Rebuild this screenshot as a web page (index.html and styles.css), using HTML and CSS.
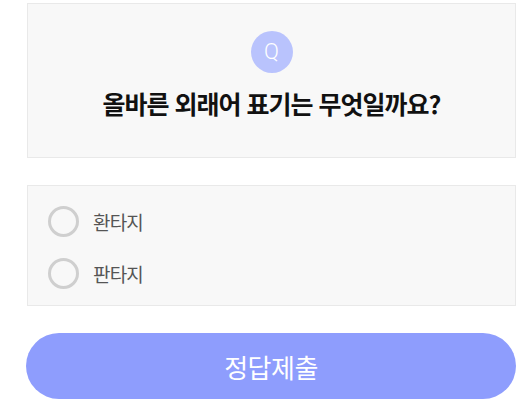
FILE: index.html
```html
<!DOCTYPE html>
<html lang="ko">
<head>
<meta charset="utf-8">
<link rel="stylesheet" href="styles.css">
</head>
<body>
<div class="quiz">
  <div class="question-card">
    <div class="q-badge">Q</div>
    <div class="q-text">올바른 외래어 표기는 무엇일까요?</div>
  </div>
  <div class="options-card">
    <label class="option"><span class="radio"></span><span class="opt-text">환타지</span></label>
    <label class="option"><span class="radio"></span><span class="opt-text">판타지</span></label>
  </div>
  <button class="submit">정답제출</button>
</div>
</body>
</html>
```

FILE: styles.css
```css
* { box-sizing: border-box; }
html, body { margin: 0; padding: 0; background: #fff; }
body {
  font-family: "Noto Sans CJK KR", "Noto Sans", sans-serif;
}
.quiz {
  width: 489px;
  margin-left: 27px;
  padding-top: 3px;
  display: flex;
  flex-direction: column;
}
.question-card {
  height: 155px;
  background: #f8f8f8;
  border: 1px solid #e9e9e9;
  display: flex;
  flex-direction: column;
  align-items: center;
  padding-top: 27px;
}
.q-badge {
  width: 42px;
  height: 42px;
  border-radius: 50%;
  background: #b9c3fd;
  color: #fff;
  font-family: "Roboto", "Noto Sans", sans-serif;
  font-size: 22px;
  font-weight: 300;
  line-height: 42px;
  text-align: center;
}
.q-text {
  margin-top: 14px;
  font-size: 25px;
  font-weight: 700;
  line-height: 32px;
  color: #111;
  letter-spacing: -1px;
}
.options-card {
  margin-top: 27px;
  height: 121px;
  background: #f8f8f8;
  border: 1px solid #e9e9e9;
  padding: 20px 0 0 20px;
  display: flex;
  flex-direction: column;
  gap: 21px;
}
.option {
  display: flex;
  align-items: center;
  gap: 14px;
  height: 31px;
}
.radio {
  width: 31px;
  height: 31px;
  border-radius: 50%;
  border: 3px solid #cfcfcf;
  background: #f8f8f8;
  flex: none;
}
.opt-text {
  font-size: 19px;
  color: #555;
  line-height: 26px;
  letter-spacing: -0.8px;
}
.submit {
  margin-top: 27px;
  margin-left: -1px;
  width: 490px;
  height: 66px;
  border: none;
  border-radius: 33px;
  background: #8e9dfd;
  color: #fff;
  font-family: "Noto Sans CJK KR", "Noto Sans", sans-serif;
  font-size: 26px;
  font-weight: 400;
  letter-spacing: -0.5px;
  padding: 0;
}
```
